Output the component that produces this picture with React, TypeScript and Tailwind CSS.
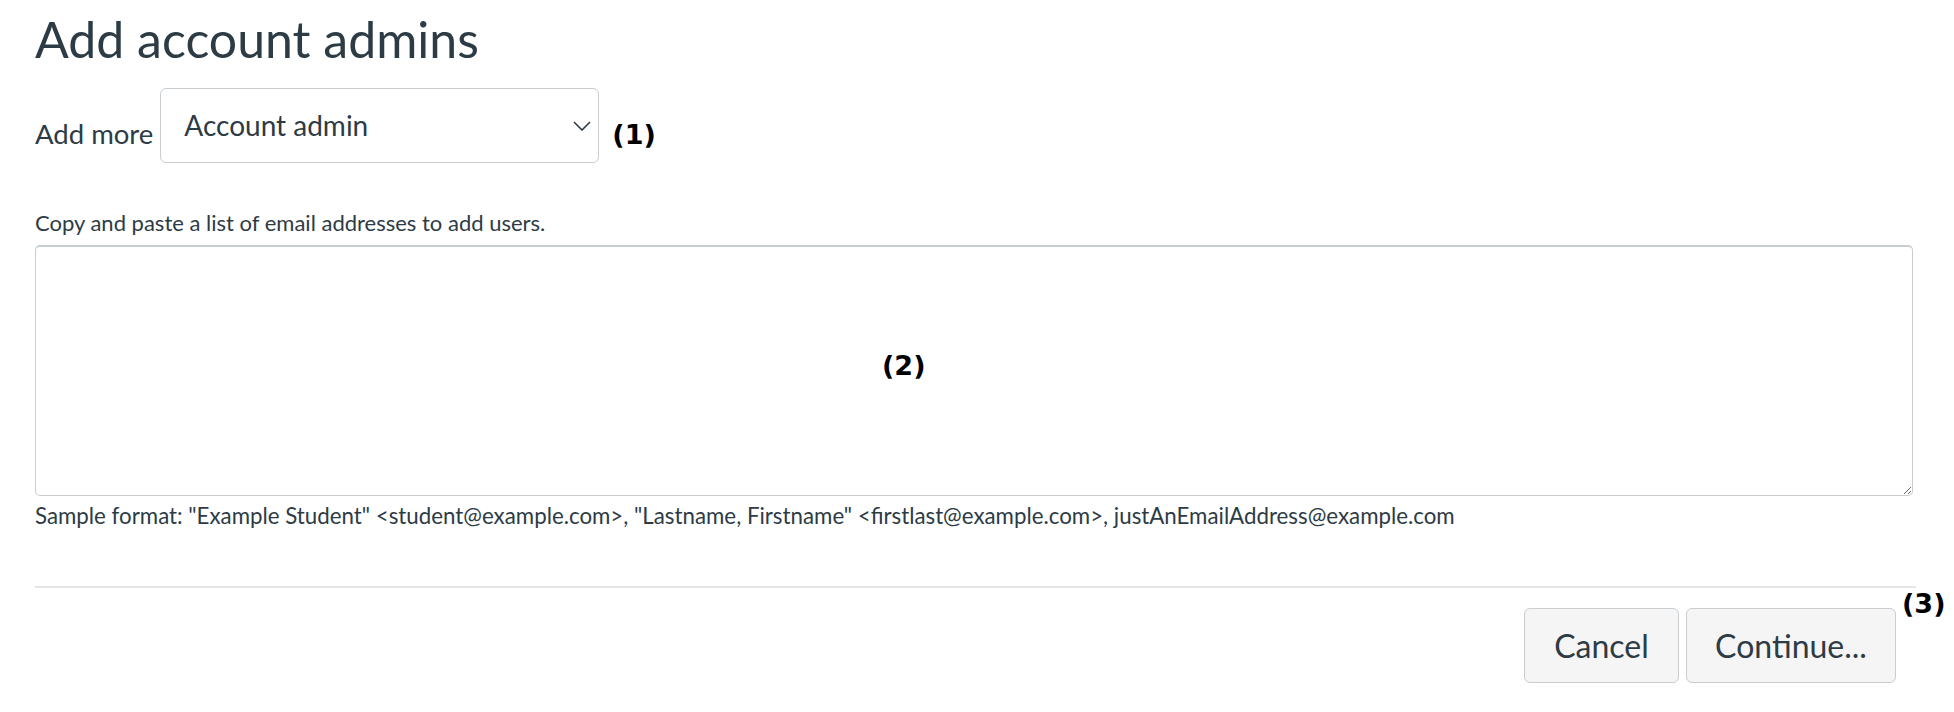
import React from 'react';

const lato = { fontFamily: 'Lato, "Liberation Sans", sans-serif' };

function Annotation({ children, className = '' }: { children: React.ReactNode; className?: string }) {
  return (
    <span
      className={`font-bold text-black text-[27px] leading-none ${className}`}
      style={{ fontFamily: '"DejaVu Sans", sans-serif' }}
    >
      {children}
    </span>
  );
}

export default function App() {
  return (
    <div className="bg-white min-h-[712px] pl-[35px] pr-[38px] text-[#2d3b45]" style={lato}>
      <h1 className="pt-[9px] text-[50px] leading-[1.2] font-normal">Add account admins</h1>

      <div className="flex items-end mt-[19px]">
        <label className="text-[27.5px] leading-[1.2] mb-[13px] mr-[7px]">Add more</label>
        <div className="flex items-center justify-between w-[439px] h-[75px] border border-[#c7cdd1] rounded-[6px] bg-white pl-[23px] pr-[7px]">
          <span className="text-[28px] leading-[1.2] pt-[1px]">Account admin</span>
          <svg width="18" height="10" viewBox="0 0 18 10" fill="none" className="mt-[1px]">
            <path d="M1 1 L9 9 L17 1" stroke="#2d3b45" strokeWidth="1.6" />
          </svg>
        </div>
        <Annotation className="ml-[13px] mb-[15px]">(1)</Annotation>
      </div>

      <p className="mt-[47px] text-[22px] leading-[1.2]">Copy and paste a list of email addresses to add users.</p>

      <div className="relative mt-[9px]">
        <textarea
          className="block w-[1878px] h-[251px] border border-[#c7cdd1] border-t-2 rounded-[5px] bg-white"
          aria-label="Email addresses"
        />
        <Annotation className="absolute left-[847px] top-[107px]">(2)</Annotation>
      </div>

      <p className="mt-[7px] text-[22.3px] leading-[1.2]">
        Sample format: "Example Student" &lt;student@example.com&gt;, "Lastname, Firstname" &lt;firstlast@example.com&gt;, justAnEmailAddress@example.com
      </p>

      <div className="mt-[56px] h-[2px] bg-[#e6e6e6]" />

      <div className="relative flex justify-end gap-[7px] pr-[20px] mt-[20px]">
        <button className="h-[75px] w-[155px] bg-[#f5f5f5] border border-[#c7cdd1] rounded-[6px] text-[32px] leading-none text-[#2d3b45]">
          Cancel
        </button>
        <button className="h-[75px] w-[210px] bg-[#f5f5f5] border border-[#c7cdd1] rounded-[6px] text-[32px] leading-none text-[#2d3b45]">
          Continue...
        </button>
        <Annotation className="absolute left-[1867px] top-[-18px]">(3)</Annotation>
      </div>
    </div>
  );
}
